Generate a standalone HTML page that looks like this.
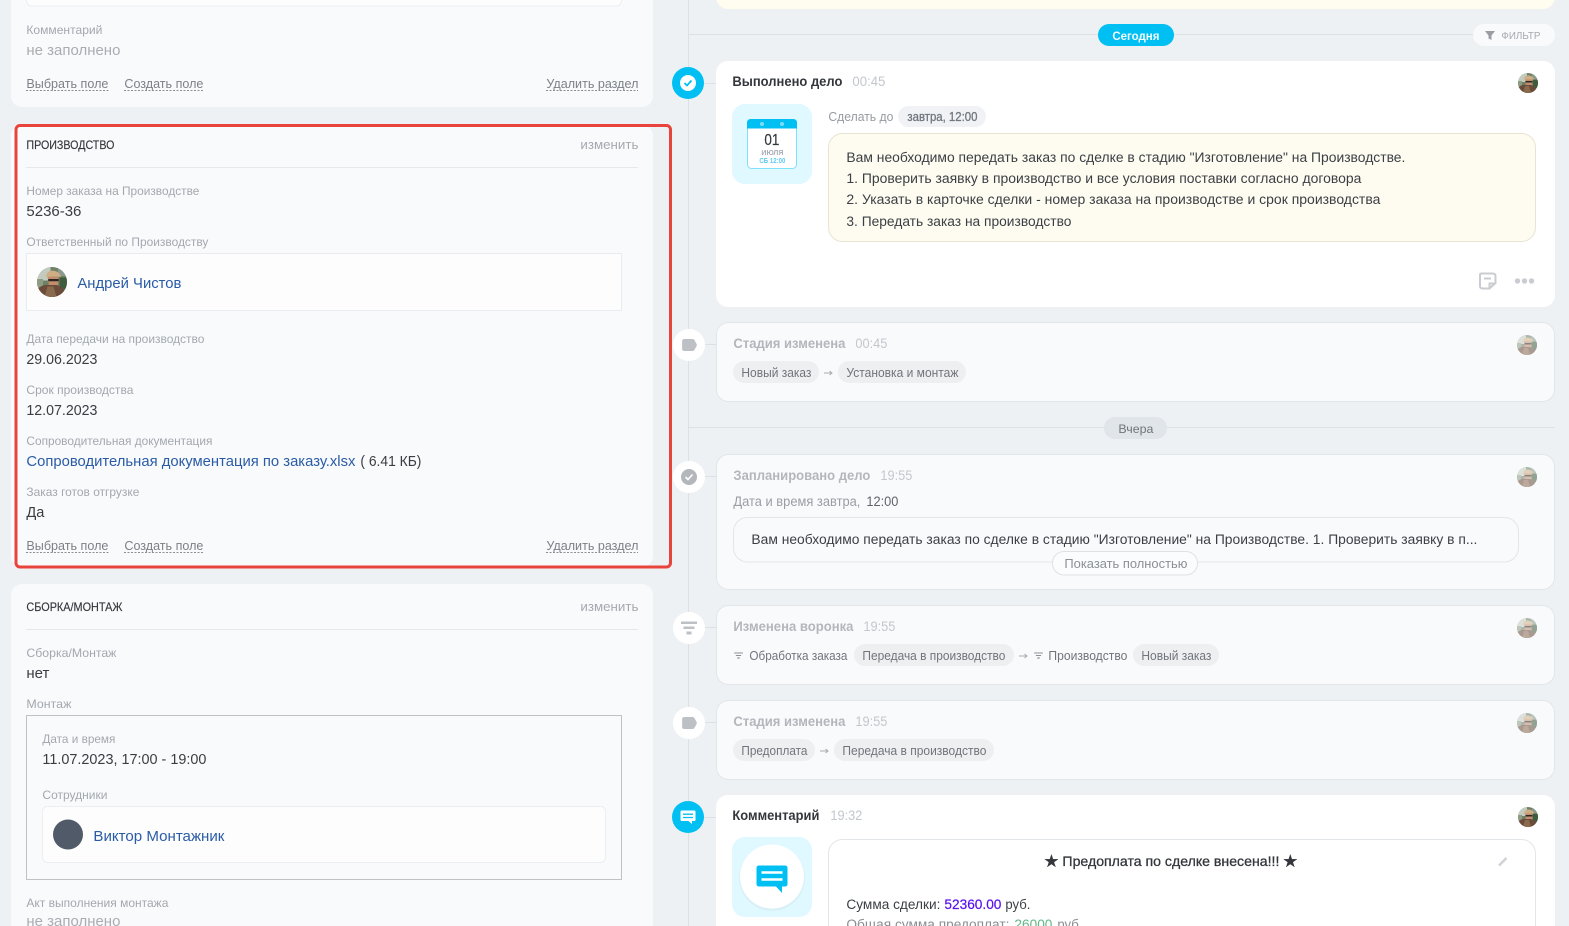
<!DOCTYPE html>
<html lang="ru"><head><meta charset="utf-8"><title>Карточка сделки</title>
<style>
html,body{margin:0;padding:0;background:#eef1f4;width:1569px;height:926px;overflow:hidden}
svg{display:block}
text{font-family:"Liberation Sans","Noto Sans CJK SC",sans-serif;font-size:14px;fill:#333;white-space:pre;transform:translate(.4px,0)}
.lb{font-size:12px;fill:#a3a8ae}
.v{font-size:14.5px;fill:#3a3d42}
.e{font-size:14.5px;fill:#a9adb2}
.lk{font-size:13px;fill:#7c8187}
.h{font-size:12px;fill:#33363b;stroke:#33363b;stroke-width:.15px}
.ch{font-size:13px;fill:#a5a9af}
.n{font-size:14.5px;fill:#2a5ca6}
.t{font-size:14px;font-weight:700;fill:#33373c}
.tg{font-size:14px;font-weight:700;fill:#b3b6bb}
.tm{font-size:14px;fill:#c3c7cc}
.ct{font-size:13.5px;fill:#3b3f45}
.cp{font-size:12.5px;fill:#70757b}
</style></head><body>
<svg xmlns="http://www.w3.org/2000/svg" width="1569" height="926" viewBox="0 0 1569 926">
<defs>
<clipPath id="ac"><circle cx="0" cy="0" r="10"/></clipPath>
<symbol id="ava" viewBox="-10 -10 20 20" overflow="visible">
<g clip-path="url(#ac)"><rect x="-10" y="-10" width="20" height="20" fill="#6f8268"/>
<rect x="-10" y="-10" width="9" height="9" fill="#c3cbbf"/><rect x="-10" y="-2" width="4" height="7" fill="#8d9c82"/><rect x="4" y="-10" width="6" height="6" fill="#8a9a8c"/><rect x="5" y="-3" width="5" height="8" fill="#3f5d3c"/>
<path d="M-4-4Q-3-8 1-7.500 5-7 6-3.500L-4-3.500Z" fill="#cfae85"/><path d="M-3-3.500H4.500L4 2-2 2.500Z" fill="#c28d6d"/><path d="M-2.500-2H4.500V-.5H-2.500Z" fill="#2e2623"/>
<path d="M-10 10V5Q-6 1-2 2L3 2Q7 3 9 7V10Z" fill="#6b4b3a"/><path d="M-5 10L-3 3 1 3 3 10Z" fill="#8a6a4c"/></g></symbol>
<symbol id="fn" viewBox="0 0 10 8"><path d="M0 .5H10V1.700H0ZM2 3.400H8V4.600H2ZM3.600 6.200H6.400V7.600H3.600Z" fill="#8b9097"/></symbol>
<symbol id="tg" viewBox="0 0 16 13"><path d="M2.500 0H11.500Q12.600 0 13.200 .9L15.600 5.200Q16.200 6.500 15.600 7.800L13.200 12.100Q12.600 13 11.500 13H2.500Q0 13 0 10.500V2.500Q0 0 2.500 0Z" fill="#bdc1c6"/></symbol>
</defs>

<rect width="1569" height="926" fill="#eef1f4"/>

<!-- left column cards -->
<rect x="11" y="-30" width="642" height="137" rx="11" fill="#f9fafc"/>
<rect x="26.500" y="-20" width="595" height="26" rx="5" fill="#fdfdfe" stroke="#eceef1"/>
<text class="lb" x="26" y="34" textLength="76" lengthAdjust="spacingAndGlyphs">Комментарий</text>
<text class="e" x="26" y="55" textLength="94" lengthAdjust="spacingAndGlyphs">не заполнено</text>
<text class="lk" x="26" y="88" textLength="82" lengthAdjust="spacingAndGlyphs">Выбрать поле</text>
<text class="lk" x="124" y="88" textLength="79" lengthAdjust="spacingAndGlyphs">Создать поле</text>
<text class="lk" x="546" y="88" textLength="92" lengthAdjust="spacingAndGlyphs">Удалить раздел</text>
<path d="M26 90.500H108.500M124 90.500H203M546 90.500H638" stroke="#8a8f95" stroke-dasharray="2 1.500"/>

<rect x="11" y="125" width="642" height="442" rx="11" fill="#f9fafc"/>
<text class="h" x="26" y="149" textLength="88" lengthAdjust="spacingAndGlyphs">ПРОИЗВОДСТВО</text>
<text class="ch" x="580" y="149" textLength="58" lengthAdjust="spacingAndGlyphs">изменить</text>
<path d="M26 167.500H638" stroke="#e6e8eb"/>
<text class="lb" x="26" y="195" textLength="173" lengthAdjust="spacingAndGlyphs">Номер заказа на Производстве</text>
<text class="v" x="26" y="216" textLength="55" lengthAdjust="spacingAndGlyphs">5236-36</text>
<text class="lb" x="26" y="246" textLength="182" lengthAdjust="spacingAndGlyphs">Ответственный по Производству</text>
<rect x="26.500" y="253.500" width="595" height="57" fill="#fdfdfe" stroke="#e9ebee"/>
<use href="#ava" x="37" y="267" width="30" height="30"/>
<text class="n" x="77" y="288" textLength="104" lengthAdjust="spacingAndGlyphs">Андрей Чистов</text>
<text class="lb" x="26" y="343" textLength="178" lengthAdjust="spacingAndGlyphs">Дата передачи на производство</text>
<text class="v" x="26" y="364" textLength="71" lengthAdjust="spacingAndGlyphs">29.06.2023</text>
<text class="lb" x="26" y="394" textLength="107" lengthAdjust="spacingAndGlyphs">Срок производства</text>
<text class="v" x="26" y="415" textLength="71" lengthAdjust="spacingAndGlyphs">12.07.2023</text>
<text class="lb" x="26" y="445" textLength="186" lengthAdjust="spacingAndGlyphs">Сопроводительная документация</text>
<text class="n" x="26" y="466" textLength="329" lengthAdjust="spacingAndGlyphs">Сопроводительная документация по заказу.xlsx</text>
<text class="v" x="360" y="466" textLength="61" lengthAdjust="spacingAndGlyphs">( 6.41 КБ)</text>
<text class="lb" x="26" y="496" textLength="113" lengthAdjust="spacingAndGlyphs">Заказ готов отгрузке</text>
<text class="v" x="26" y="517" textLength="18" lengthAdjust="spacingAndGlyphs">Да</text>
<text class="lk" x="26" y="550" textLength="82" lengthAdjust="spacingAndGlyphs">Выбрать поле</text>
<text class="lk" x="124" y="550" textLength="79" lengthAdjust="spacingAndGlyphs">Создать поле</text>
<text class="lk" x="546" y="550" textLength="92" lengthAdjust="spacingAndGlyphs">Удалить раздел</text>
<path d="M26 552.500H108.500M124 552.500H203M546 552.500H638" stroke="#8a8f95" stroke-dasharray="2 1.500"/>
<rect x="16" y="125.500" width="654.500" height="441.500" rx="4" fill="none" stroke="#e8443b" stroke-width="3"/>

<rect x="11" y="584" width="642" height="372" rx="11" fill="#f9fafc"/>
<text class="h" x="26" y="611" textLength="96" lengthAdjust="spacingAndGlyphs">СБОРКА/МОНТАЖ</text>
<text class="ch" x="580" y="611" textLength="58" lengthAdjust="spacingAndGlyphs">изменить</text>
<path d="M26 629.500H638" stroke="#e6e8eb"/>
<text class="lb" x="26" y="657" textLength="90" lengthAdjust="spacingAndGlyphs">Сборка/Монтаж</text>
<text class="v" x="26" y="678" textLength="23" lengthAdjust="spacingAndGlyphs">нет</text>
<text class="lb" x="26" y="708" textLength="45" lengthAdjust="spacingAndGlyphs">Монтаж</text>
<rect x="26.500" y="715.500" width="595" height="164" fill="none" stroke="#bfc1c4"/>
<text class="lb" x="42" y="743" textLength="73" lengthAdjust="spacingAndGlyphs">Дата и время</text>
<text class="v" x="42" y="764" textLength="164" lengthAdjust="spacingAndGlyphs">11.07.2023, 17:00 - 19:00</text>
<text class="lb" x="42" y="799" textLength="65" lengthAdjust="spacingAndGlyphs">Сотрудники</text>
<rect x="42.500" y="806.500" width="563" height="56" rx="5" fill="#fdfdfe" stroke="#eceef1"/>
<circle cx="68" cy="834.500" r="15" fill="#515a69"/>
<text class="n" x="93" y="841" textLength="131" lengthAdjust="spacingAndGlyphs">Виктор Монтажник</text>
<text class="lb" x="26" y="907" textLength="142" lengthAdjust="spacingAndGlyphs">Акт выполнения монтажа</text>
<text class="e" x="26" y="926" textLength="94" lengthAdjust="spacingAndGlyphs">не заполнено</text>

<!-- timeline -->
<path d="M688.500 0V926" stroke="#dde1e6"/>
<rect x="716" y="-30" width="839" height="39" rx="12" fill="#fefdf0"/>
<path d="M688 34.500H1473" stroke="#dde1e6"/>
<path d="M688 427.500H1555" stroke="#dde1e6"/>
<rect x="1098" y="24" width="76" height="22" rx="11" fill="#00c0f3"/>
<text x="1112" y="40" textLength="47" lengthAdjust="spacingAndGlyphs" style="font-size:12px;font-weight:700;fill:#f2fcff">Сегодня</text>
<rect x="1473" y="24" width="82" height="22" rx="11" fill="#f9fafc"/>
<path d="M1485 31H1495L1491.500 35.500V40L1488.500 38.500V35.500Z" fill="#9a9ea4"/>
<text x="1501" y="39" textLength="39" lengthAdjust="spacingAndGlyphs" style="font-size:10px;fill:#a5a9ae">ФИЛЬТР</text>

<!-- Card A -->
<path d="M704 83.500H716" stroke="#dde1e6"/>
<rect x="716" y="61" width="839" height="246" rx="12" fill="#fff"/>
<circle cx="688" cy="83" r="16" fill="#00c0f3"/>
<circle cx="688" cy="83" r="8" fill="#fff"/>
<path d="M684.500 83L687 85.500L691.500 80.500" fill="none" stroke="#00c0f3" stroke-width="1.800"/>
<text class="t" x="732" y="86" textLength="110" lengthAdjust="spacingAndGlyphs">Выполнено дело</text>
<text class="tm" x="852" y="86" textLength="33" lengthAdjust="spacingAndGlyphs">00:45</text>
<use href="#ava" x="1518" y="73" width="20" height="20"/>
<rect x="732" y="104" width="80" height="80" rx="13" fill="#e0f8ff"/>
<rect x="747.500" y="119.500" width="49" height="49" rx="4" fill="#fff" stroke="#7fe0fb"/>
<path d="M747 128.500V123Q747 119 751 119H793Q797 119 797 123V128.500Z" fill="#00c0f3"/>
<circle cx="762" cy="124" r="2" fill="#7fdcf7"/><circle cx="782" cy="124" r="2" fill="#7fdcf7"/>
<text x="764" y="145" textLength="15" lengthAdjust="spacingAndGlyphs" style="font-size:16px;fill:#33383f;stroke:#33383f;stroke-width:.2px">01</text>
<text x="761" y="155" textLength="22" lengthAdjust="spacingAndGlyphs" style="font-size:7px;font-weight:700;fill:#a9adb5">ИЮЛЯ</text>
<text x="759" y="163" textLength="26" lengthAdjust="spacingAndGlyphs" style="font-size:7px;font-weight:700;fill:#5cc9f5">СБ 12:00</text>
<text x="828" y="121" textLength="65" lengthAdjust="spacingAndGlyphs" style="font-size:13px;fill:#969ba1">Сделать до</text>
<rect x="898" y="106" width="88" height="21" rx="10.500" fill="#f0f2f5"/>
<text x="907" y="121" textLength="70" lengthAdjust="spacingAndGlyphs" style="font-size:12.500px;fill:#72777e;stroke:#72777e;stroke-width:.3px">завтра, 12:00</text>
<rect x="828.500" y="133.500" width="707" height="108" rx="14" fill="#fefcf0" stroke="#e8e4d4"/>
<text class="ct" x="846" y="162" textLength="559" lengthAdjust="spacingAndGlyphs">Вам необходимо передать заказ по сделке в стадию "Изготовление" на Производстве.</text>
<text class="ct" x="846" y="183" textLength="515" lengthAdjust="spacingAndGlyphs">1. Проверить заявку в производство и все условия поставки согласно договора</text>
<text class="ct" x="846" y="204" textLength="534" lengthAdjust="spacingAndGlyphs">2. Указать в карточке сделки - номер заказа на производстве и срок производства</text>
<text class="ct" x="846" y="226" textLength="225" lengthAdjust="spacingAndGlyphs">3. Передать заказ на производство</text>
<path d="M1481.500 273.500H1492.500Q1495.500 273.500 1495.500 276.500V283L1489.500 288.500H1482.500Q1480 288.500 1480 286V275Q1480 273.500 1481.500 273.500ZM1484 278.500H1491M1489.500 288V283.500H1495" fill="none" stroke="#c9ccd1" stroke-width="2"/>
<circle cx="1517.500" cy="281" r="2.700" fill="#c9ccd1"/><circle cx="1524.500" cy="281" r="2.700" fill="#c9ccd1"/><circle cx="1531.500" cy="281" r="2.700" fill="#c9ccd1"/>

<!-- Card B -->
<path d="M705 344.500H716" stroke="#dde1e6"/>
<rect x="716.500" y="322.500" width="838" height="79" rx="12" fill="#f9fafc" stroke="#e3e6e9"/>
<circle cx="689" cy="345" r="16" fill="#fff"/>
<use href="#tg" x="682" y="339" width="15" height="12"/>
<text class="tg" x="733" y="348" textLength="112" lengthAdjust="spacingAndGlyphs">Стадия изменена</text>
<text class="tm" x="855" y="348" textLength="32" lengthAdjust="spacingAndGlyphs">00:45</text>
<use href="#ava" x="1517" y="335" width="20" height="20" opacity=".55"/>
<rect x="733" y="361" width="86" height="22" rx="11" fill="#eeeff1"/>
<text class="cp" x="741" y="377" textLength="70" lengthAdjust="spacingAndGlyphs">Новый заказ</text>
<path d="M824 373H832M829.500 371L832 373L829.500 375" fill="none" stroke="#a9adb2"/>
<rect x="838" y="361" width="128" height="22" rx="11" fill="#eeeff1"/>
<text class="cp" x="846" y="377" textLength="112" lengthAdjust="spacingAndGlyphs">Установка и монтаж</text>

<rect x="1104" y="417" width="63" height="22" rx="11" fill="#dfe5e8"/>
<text x="1118" y="433" textLength="35" lengthAdjust="spacingAndGlyphs" style="font-size:12px;fill:#6f747a">Вчера</text>

<!-- Card C -->
<path d="M705 476.500H716" stroke="#dde1e6"/>
<rect x="716.500" y="454.500" width="838" height="135" rx="12" fill="#f9fafc" stroke="#e3e6e9"/>
<circle cx="689" cy="477" r="16" fill="#fff"/>
<circle cx="689" cy="477" r="8" fill="#b3b6bb"/>
<path d="M685.500 477L688 479.500L692.500 474.500" fill="none" stroke="#fff" stroke-width="1.600"/>
<text class="tg" x="733" y="480" textLength="137" lengthAdjust="spacingAndGlyphs">Запланировано дело</text>
<text class="tm" x="880" y="480" textLength="32" lengthAdjust="spacingAndGlyphs">19:55</text>
<use href="#ava" x="1517" y="467" width="20" height="20" opacity=".55"/>
<text x="733" y="506" textLength="127" lengthAdjust="spacingAndGlyphs" style="font-size:13.500px;fill:#9a9ea4">Дата и время завтра,</text>
<text x="866" y="506" textLength="32" lengthAdjust="spacingAndGlyphs" style="font-size:13.500px;fill:#5f646a">12:00</text>
<rect x="733.500" y="517.500" width="785" height="44.500" rx="14" fill="#f9fafc" stroke="#e3e6e9"/>
<text class="ct" x="751" y="544" textLength="726" lengthAdjust="spacingAndGlyphs">Вам необходимо передать заказ по сделке в стадию "Изготовление" на Производстве. 1. Проверить заявку в п...</text>
<rect x="1052.500" y="551.500" width="145" height="23.500" rx="11.500" fill="#fbfcfd" stroke="#dfe2e5"/>
<text x="1064" y="568" textLength="123" lengthAdjust="spacingAndGlyphs" style="font-size:13px;fill:#8b9096">Показать полностью</text>

<!-- Card D -->
<path d="M705 627.500H716" stroke="#dde1e6"/>
<rect x="716.500" y="605.500" width="838" height="79" rx="12" fill="#f9fafc" stroke="#e3e6e9"/>
<circle cx="689" cy="628" r="16" fill="#fff"/>
<path d="M681 621.500H697V624H681ZM683.500 626.500H694.500V629H683.500ZM686.500 631.500H691.500V634.500H686.500Z" fill="#bdc1c6"/>
<text class="tg" x="733" y="631" textLength="120" lengthAdjust="spacingAndGlyphs">Изменена воронка</text>
<text class="tm" x="863" y="631" textLength="32" lengthAdjust="spacingAndGlyphs">19:55</text>
<use href="#ava" x="1517" y="618" width="20" height="20" opacity=".55"/>
<use href="#fn" x="734" y="652" width="9" height="7"/>
<text class="cp" x="749" y="660" textLength="98" lengthAdjust="spacingAndGlyphs">Обработка заказа</text>
<rect x="854" y="644" width="160" height="22" rx="11" fill="#eeeff1"/>
<text class="cp" x="862" y="660" textLength="143" lengthAdjust="spacingAndGlyphs">Передача в производство</text>
<path d="M1019 656H1027M1024.500 654L1027 656L1024.500 658" fill="none" stroke="#a9adb2"/>
<use href="#fn" x="1034" y="652" width="9" height="7"/>
<text class="cp" x="1048" y="660" textLength="79" lengthAdjust="spacingAndGlyphs">Производство</text>
<rect x="1133" y="644" width="86" height="22" rx="11" fill="#eeeff1"/>
<text class="cp" x="1141" y="660" textLength="70" lengthAdjust="spacingAndGlyphs">Новый заказ</text>

<!-- Card E -->
<path d="M705 722.500H716" stroke="#dde1e6"/>
<rect x="716.500" y="700.500" width="838" height="79" rx="12" fill="#f9fafc" stroke="#e3e6e9"/>
<circle cx="689" cy="723" r="16" fill="#fff"/>
<use href="#tg" x="682" y="717" width="15" height="12"/>
<text class="tg" x="733" y="726" textLength="112" lengthAdjust="spacingAndGlyphs">Стадия изменена</text>
<text class="tm" x="855" y="726" textLength="32" lengthAdjust="spacingAndGlyphs">19:55</text>
<use href="#ava" x="1517" y="713" width="20" height="20" opacity=".55"/>
<rect x="733" y="739" width="82" height="22" rx="11" fill="#eeeff1"/>
<text class="cp" x="741" y="755" textLength="66" lengthAdjust="spacingAndGlyphs">Предоплата</text>
<path d="M820 751H828M825.500 749L828 751L825.500 753" fill="none" stroke="#a9adb2"/>
<rect x="834" y="739" width="160" height="22" rx="11" fill="#eeeff1"/>
<text class="cp" x="842" y="755" textLength="144" lengthAdjust="spacingAndGlyphs">Передача в производство</text>

<!-- Card F -->
<path d="M704 817.500H716" stroke="#dde1e6"/>
<rect x="716" y="795" width="839" height="170" rx="12" fill="#fff"/>
<circle cx="688" cy="817" r="16" fill="#00c0f3"/>
<path d="M681.500 810.500H694.500Q695.500 810.500 695.500 811.500V820Q695.500 821 694.500 821H692V824L688.500 821H681.500Q680.500 821 680.500 820V811.500Q680.500 810.500 681.500 810.500Z" fill="#fff"/>
<path d="M683 814.200H693M683 817.500H693" stroke="#00c0f3" stroke-width="1.300"/>
<text class="t" x="732" y="820" textLength="87" lengthAdjust="spacingAndGlyphs">Комментарий</text>
<text class="tm" x="830" y="820" textLength="32" lengthAdjust="spacingAndGlyphs">19:32</text>
<use href="#ava" x="1518" y="807" width="20" height="20"/>
<rect x="732" y="837" width="80" height="80" rx="13" fill="#e0f8ff"/>
<circle cx="772" cy="878" r="33" fill="#d3ebf1" opacity=".6"/>
<circle cx="772" cy="876.500" r="32" fill="#fff"/>
<path d="M759 865.500H785Q787.500 865.500 787.500 868V884Q787.500 886.500 785 886.500H782V893L776 886.500H759Q756.500 886.500 756.500 884V868Q756.500 865.500 759 865.500Z" fill="#00c0f3"/>
<path d="M761.500 872.500H782.500M761.500 879.500H782.500" stroke="#fff" stroke-width="2.500"/>
<rect x="828.500" y="839.500" width="707" height="120" rx="14" fill="#fff" stroke="#e3e6e9"/>
<text x="1044" y="866" textLength="253" lengthAdjust="spacingAndGlyphs" style="font-size:14px;fill:#33373c;stroke:#33373c;stroke-width:.3px">★ Предоплата по сделке внесена!!! ★</text>
<path d="M1499 865.500L1506.500 858" stroke="#cfd2d6" stroke-width="2.500"/>
<text class="ct" x="846" y="909" textLength="94" lengthAdjust="spacingAndGlyphs">Сумма сделки:</text>
<text class="ct" x="944" y="909" textLength="57" lengthAdjust="spacingAndGlyphs" style="fill:#5b12f0;stroke:#5b12f0;stroke-width:.2px">52360.00</text>
<text class="ct" x="1005" y="909" textLength="25" lengthAdjust="spacingAndGlyphs">руб.</text>
<text class="ct" x="846" y="929" textLength="163" lengthAdjust="spacingAndGlyphs" style="fill:#8a8e93">Общая сумма предоплат:</text>
<text class="ct" x="1014" y="929" textLength="38" lengthAdjust="spacingAndGlyphs" style="fill:#5fb884">26000</text>
<text class="ct" x="1057" y="929" textLength="25" lengthAdjust="spacingAndGlyphs" style="fill:#8a8e93">руб.</text>
</svg>
</body></html>
